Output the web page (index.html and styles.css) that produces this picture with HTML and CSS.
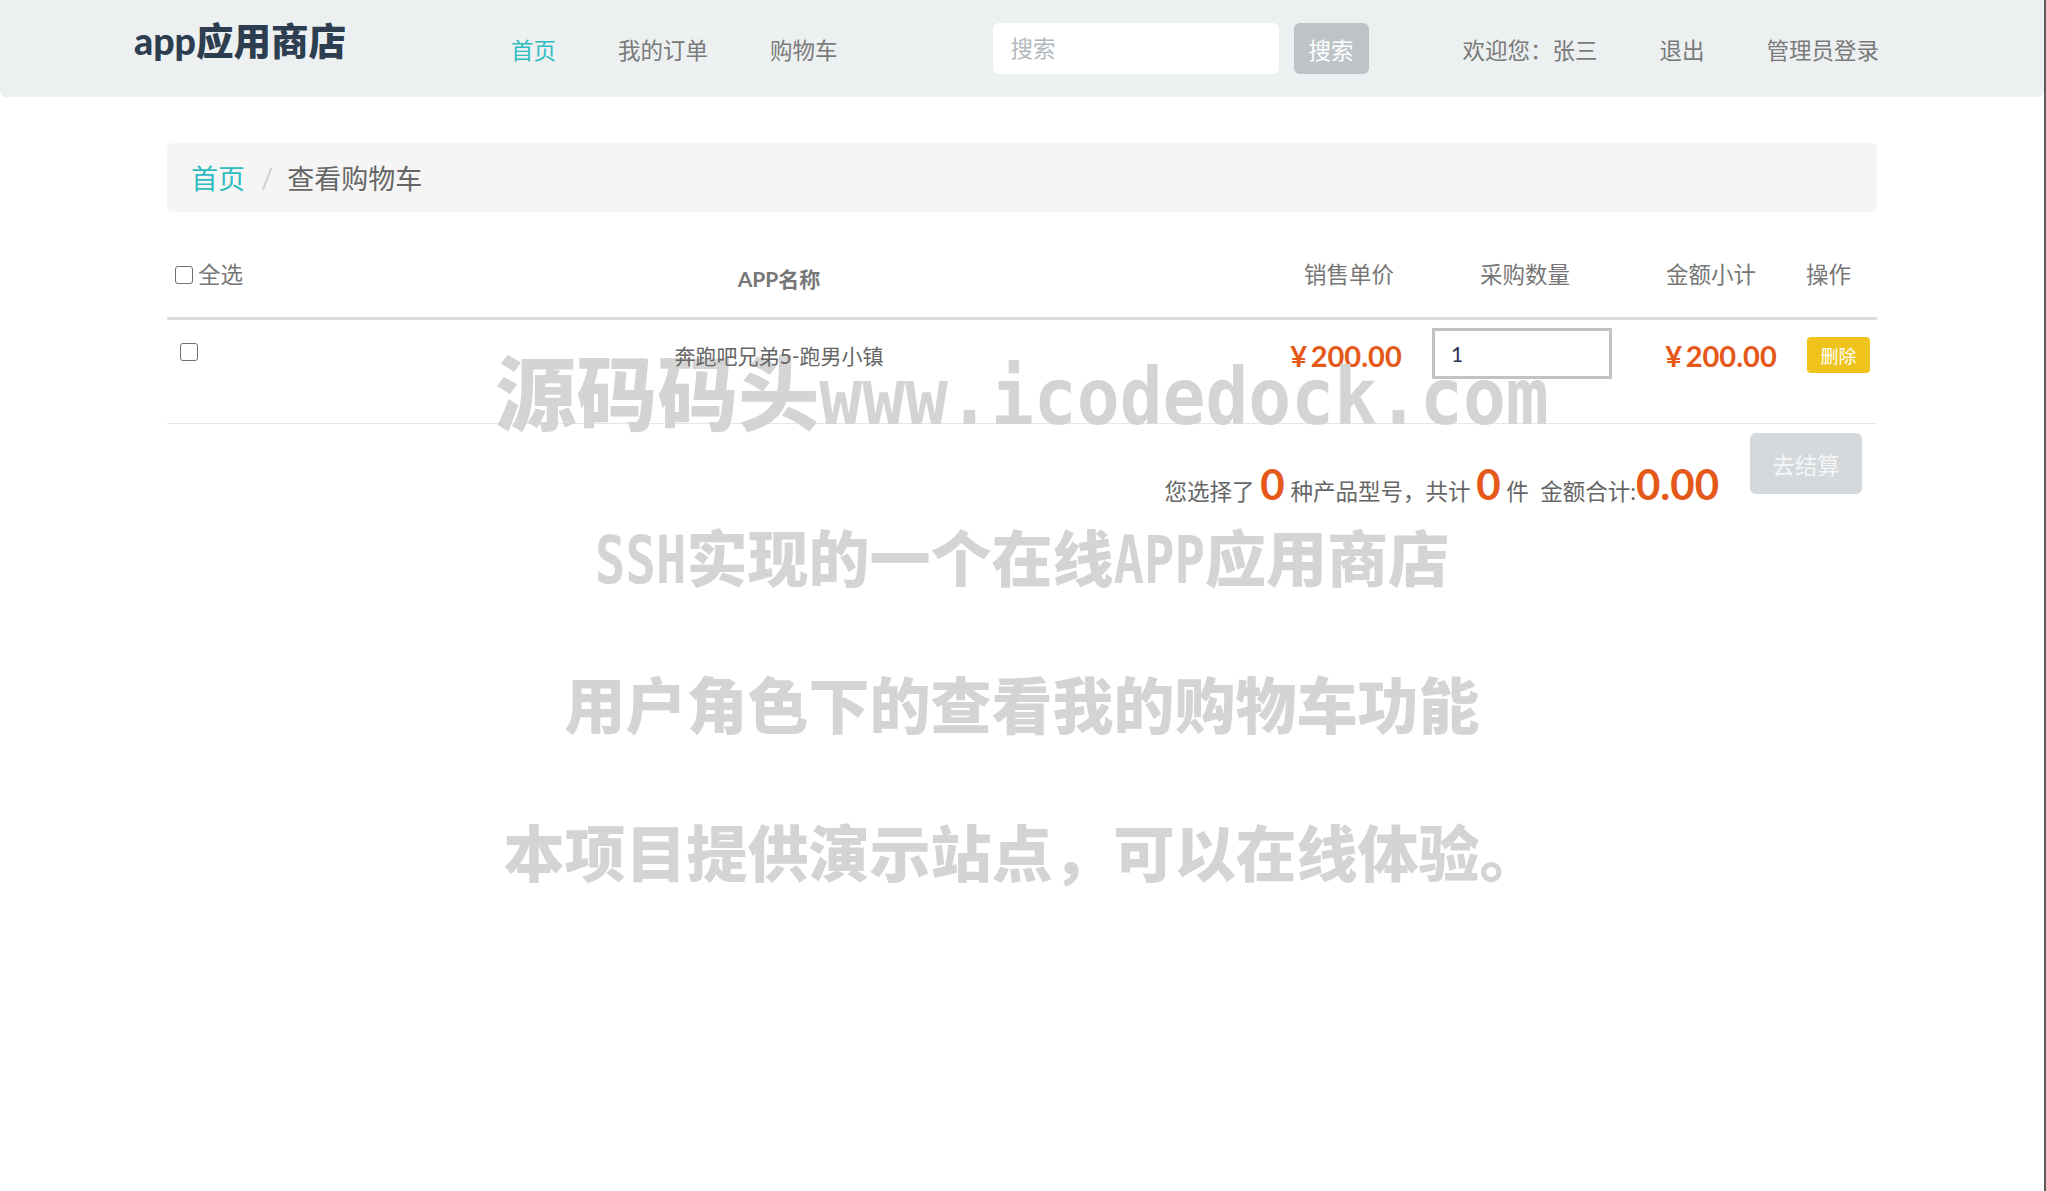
FILE: index.html
```html
<!DOCTYPE html>
<html lang="zh">
<head>
<meta charset="utf-8">
<title>查看购物车 - app应用商店</title>
<link rel="stylesheet" href="styles.css">
</head>
<body>
<nav class="navbar">
  <a class="brand">app应用商店</a>
  <ul class="nav nav-main">
    <li class="active"><a>首页</a></li>
    <li><a>我的订单</a></li>
    <li><a>购物车</a></li>
  </ul>
  <form class="search">
    <input type="text" placeholder="搜索">
    <button type="button">搜索</button>
  </form>
  <ul class="nav nav-user">
    <li><a>欢迎您：张三</a></li>
    <li><a>退出</a></li>
    <li><a>管理员登录</a></li>
  </ul>
</nav>

<main class="container">
  <ol class="breadcrumb">
    <li class="crumb-link">首页</li>
    <li class="crumb-sep">/</li>
    <li class="crumb-cur">查看购物车</li>
  </ol>

  <div class="cart">
    <div class="cart-row cart-head">
      <div class="cell c-sel"><input type="checkbox" class="chk"><span class="sel-label">全选</span></div>
      <div class="cell c-name">APP名称</div>
      <div class="cell c-mid">销售单价</div>
      <div class="cell c-mid">采购数量</div>
      <div class="cell c-mid">金额小计</div>
      <div class="cell c-op">操作</div>
    </div>
    <div class="cart-row cart-item">
      <div class="cell i-sel"><input type="checkbox" class="chk"></div>
      <div class="cell i-name"><span class="name-text">奔跑吧兄弟5-跑男小镇</span></div>
      <div class="cell i-price">¥&thinsp;200.00</div>
      <div class="cell i-qty"><input type="text" class="qty" value="1"></div>
      <div class="cell i-price i-sub">¥&thinsp;200.00</div>
      <div class="cell i-op"><button type="button" class="btn-del">删除</button></div>
    </div>
    <div class="cart-foot">
      <div class="summary">您选择了 <span class="big">0</span> 种产品型号，共计 <span class="big">0</span> 件&nbsp;&nbsp;金额合计:<span class="big">0.00</span></div>
      <button type="button" class="btn-pay">去结算</button>
    </div>
  </div>
</main>

<div class="wm">
  <div class="wm-line wm-l1">源码码头<span class="wm-en">www.icodedock.com</span></div>
  <div class="wm-line wm-l2"><span class="wm-en">SSH</span>实现的一个在线<span class="wm-en">APP</span>应用商店</div>
  <div class="wm-line">用户角色下的查看我的购物车功能</div>
  <div class="wm-line">本项目提供演示站点，可以在线体验。</div>
</div>
</body>
</html>
```

FILE: styles.css
```css
* {
  box-sizing: border-box;
}

html, body {
  margin: 0;
  padding: 0;
}

body {
  position: relative;
  min-height: 1191px;
  background: #fff;
  border-right: 2px solid #5c5c5c;
  font-family: "Lato", "Noto Sans CJK SC", sans-serif;
  font-size: 22.5px;
  color: #777;
}

/* ---------- navbar ---------- */
.navbar {
  display: flex;
  align-items: center;
  height: 97px;
  padding-left: 134px;
  background: #ecf0f1;
  border-radius: 0 0 6px 6px;
}

.brand {
  align-self: flex-start;
  display: inline-block;
  width: 211px;
  padding-top: 17px;
  line-height: 48px;
  font-size: 37.5px;
  font-weight: 900;
  color: #2c3e50;
  white-space: nowrap;
}

.nav {
  display: flex;
  margin: 0;
  padding: 0;
  list-style: none;
}

.nav a {
  display: block;
  padding: 4px 31px 0;
  line-height: 34px;
  font-size: 22.5px;
  color: #7a7a7a;
  white-space: nowrap;
}

.nav-main {
  margin-left: 135px;
}

.nav .active a {
  color: #2fbcc0;
}

.search {
  display: flex;
  gap: 15px;
  margin: 0 0 0 124px;
}

.search input {
  width: 286px;
  height: 51px;
  padding: 0 18px;
  border: 0;
  border-radius: 6px;
  background: #fff;
  font-family: inherit;
  font-size: 22.5px;
  color: #555;
  outline: none;
}

.search input::placeholder {
  color: #b3b8bd;
}

.search button {
  width: 75px;
  height: 51px;
  padding: 0;
  border: 0;
  border-radius: 6px;
  background: #bdc3c7;
  color: #fff;
  font-family: inherit;
  font-size: 22.5px;
}

.nav-user {
  margin-left: 63px;
}

/* ---------- container ---------- */
.container {
  width: 1710px;
  margin: 0 auto;
}

.breadcrumb {
  display: flex;
  align-items: center;
  height: 69px;
  margin: 46px 0 31px;
  padding: 0 24px;
  list-style: none;
  background: #f5f5f5;
  border-radius: 6px;
  font-size: 27px;
  color: #666;
}

.crumb-link {
  color: #2fbcc0;
}

.crumb-sep {
  margin: 0 14px 0 16px;
  color: #ccc;
}

/* ---------- cart table ---------- */
.cart-row {
  display: grid;
  grid-template-columns: 122px 980px 154px 198px 174px 82px;
}

.cart-head {
  height: 77px;
  border-bottom: 3px solid #dcdcdc;
}

.cart-head .cell {
  padding-top: 15px;
  line-height: 34px;
  font-size: 22.5px;
  color: #777;
}

.c-sel {
  display: flex;
  align-items: center;
  align-self: start;
  height: 49px;
  padding-left: 8px;
}

.sel-label {
  margin-left: 5px;
}

.cart-head .c-name {
  padding-top: 19px;
  text-align: center;
  font-size: 21px;
  font-weight: 700;
}

.c-mid {
  text-align: center;
  padding-left: 6px;
}

.c-op {
  padding-left: 11px;
}

.chk {
  appearance: none;
  -webkit-appearance: none;
  display: block;
  width: 18px;
  height: 18px;
  margin: 0;
  border: 1.5px solid #6f6f6f;
  border-radius: 3px;
  background: #fff;
}

.cart-item {
  height: 104px;
  border-bottom: 1px solid #e6e6e6;
}

.i-sel {
  padding: 23px 0 0 13px;
}

.i-name {
  padding-top: 21px;
  line-height: 30px;
  font-size: 21px;
  color: #666;
  text-align: center;
}

.name-text {
  position: relative;
  z-index: 5;
}

.i-price {
  padding-top: 16px;
  line-height: 40px;
  font-size: 29px;
  font-weight: 700;
  color: #e4581a;
  text-align: center;
  white-space: nowrap;
}

.i-sub {
  padding-left: 26px;
}

.i-qty {
  display: flex;
  justify-content: center;
  padding-top: 8px;
}

.qty {
  width: 180px;
  height: 51px;
  padding: 0 16px;
  border: 3px solid #c2c2c2;
  border-radius: 0;
  background: #fff;
  font-family: inherit;
  font-size: 21px;
  color: #2e3450;
  outline: none;
}

.i-op {
  padding: 17px 0 0 12px;
}

.btn-del {
  display: block;
  width: 63px;
  height: 36px;
  padding: 0;
  border: 0;
  border-radius: 4px;
  background: #efc31c;
  color: #fff;
  font-family: inherit;
  font-size: 18px;
}

.cart-foot {
  display: flex;
  justify-content: flex-end;
  align-items: flex-start;
  padding: 9px 15px 0 0;
}

.summary {
  margin: 30px 31px 0 0;
  line-height: 1;
  font-size: 22.5px;
  color: #666;
  white-space: nowrap;
}

.big {
  font-size: 42px;
  font-weight: 700;
  color: #e4581a;
}

.btn-pay {
  width: 112px;
  height: 61px;
  padding: 0;
  border: 0;
  border-radius: 6px;
  background: #d5d9dc;
  color: #f4f5f6;
  font-family: inherit;
  font-size: 22.5px;
}

/* ---------- watermark overlay ---------- */
.wm {
  position: absolute;
  top: 0;
  left: 0;
  z-index: 2;
  width: 100%;
  padding-top: 348px;
  display: flex;
  flex-direction: column;
  align-items: center;
  gap: 87px;
  font-family: "Noto Sans CJK SC", sans-serif;
  font-weight: 900;
  color: #d4d4d4;
  pointer-events: none;
  white-space: nowrap;
}

.wm-line {
  font-size: 61px;
  line-height: 61px;
}

.wm-l1 {
  font-size: 81px;
  line-height: 81px;
  margin-bottom: -2px;
}

.wm-l2 {
  margin-bottom: -10px;
}

.wm-en {
  display: inline-block;
  font-family: "DejaVu Sans Mono", monospace;
  font-weight: 700;
  font-size: 0.83em;
  transform: scaleY(1.3);
  transform-origin: 50% 75%;
}

.wm-l1 .wm-en {
  font-size: 0.88em;
  transform: scaleY(1.1);
}
```
